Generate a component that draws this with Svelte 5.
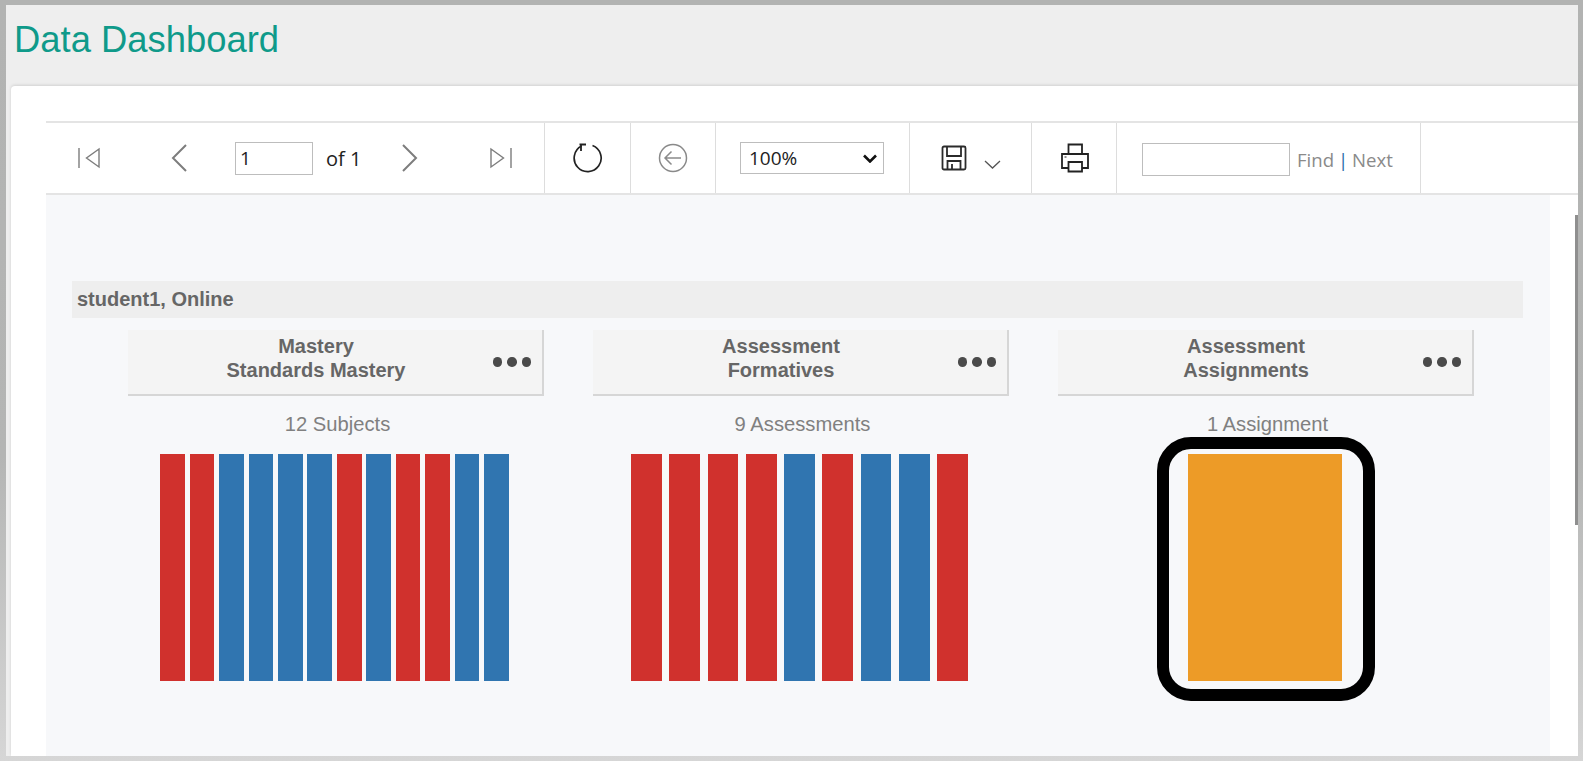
<script>
  const R = 'red', B = 'blue', O = 'orange';
  const panels = [
    { l1: 'Mastery', l2: 'Standards Mastery', sub: '12 Subjects', bars: [R,R,B,B,B,B,R,B,R,R,B,B], cls: 'c12' },
    { l1: 'Assessment', l2: 'Formatives', sub: '9 Assessments', bars: [R,R,R,R,B,R,B,B,R], cls: 'c9' },
    { l1: 'Assessment', l2: 'Assignments', sub: '1 Assignment', bars: [O], cls: 'c1', ring: true }
  ];
</script>

<div class="frame">
  <div class="page">
    <header class="head"><h1>Data Dashboard</h1></header>
    <main class="card">
      <div class="viewer">
        <div class="toolbar">
          <div class="cell nav">
            <svg class="i-first" width="22" height="22" viewBox="0 0 22 22" fill="none" stroke="#7d7d7d" stroke-width="1.4"><path d="M1 1v20M21 2 8.500 11 21 20z"/></svg>
            <svg class="i-prev" width="16" height="28" viewBox="0 0 16 28" fill="none" stroke="#7d7d7d" stroke-width="2"><path d="M15 1 2 14l13 13"/></svg>
            <input class="box pageno" value="1" aria-label="Page" />
            <span class="of">of 1</span>
            <svg class="i-next" width="16" height="28" viewBox="0 0 16 28" fill="none" stroke="#7d7d7d" stroke-width="2"><path d="m1 1 13 13L1 27"/></svg>
            <svg class="i-last" width="22" height="22" viewBox="0 0 22 22" fill="none" stroke="#7d7d7d" stroke-width="1.4"><path d="M21 1v20M1 2l12.500 9L1 20z"/></svg>
          </div>
          <div class="cell w-refresh">
            <svg width="30" height="30" viewBox="0 0 30 30" fill="none" stroke="#222" stroke-width="1.7"><path d="M19.500 2.500a13.500 13.500 0 1 1-11 .6"/><path d="M6.500 1.500h6.500M8 1.500v6.500" stroke-width="1.800"/></svg>
          </div>
          <div class="cell w-back">
            <svg width="30" height="30" viewBox="0 0 30 30" fill="none" stroke="#8a8a8a" stroke-width="1.500"><circle cx="15" cy="15" r="13.500"/><path d="M23 15H7m6.500-6.500L7 15l6.500 6.500"/></svg>
          </div>
          <div class="cell w-zoom">
            <div class="selwrap">
              <select class="box zoomsel" aria-label="Zoom"><option>100%</option></select>
              <svg class="selarrow" width="14" height="9" viewBox="0 0 14 9" fill="none" stroke="#111" stroke-width="2.600"><path d="m1 1.500 6 6 6-6"/></svg>
            </div>
          </div>
          <div class="cell w-save">
            <svg width="26" height="26" viewBox="0 0 26 26" fill="none" stroke="#2b2b2b" stroke-width="1.800"><path d="M3 1.500h20a1.500 1.500 0 0 1 1.500 1.500v20a1.500 1.500 0 0 1-1.500 1.500H3A1.500 1.500 0 0 1 1.500 23V3A1.500 1.500 0 0 1 3 1.500z"/><path d="M6 1.500v9.500h14V1.500M6.500 24.500V16h13v8.500M11 24.500V19"/></svg>
            <svg class="i-chev" width="17" height="9" viewBox="0 0 17 9" fill="none" stroke="#555" stroke-width="1.300"><path d="m1 1 7.500 7L16 1"/></svg>
          </div>
          <div class="cell w-print">
            <svg width="30" height="30" viewBox="0 0 30 30" fill="none" stroke="#222" stroke-width="1.800"><path d="M8.500 11V1.500h13.500V11M8.500 25H2V11h26v14h-6"/><path d="M8.500 19h13.500v9.500H8.500z"/><path d="M4.500 14h2" stroke-width="1"/></svg>
          </div>
          <div class="cell w-find">
            <input class="box findbox" aria-label="Find" />
            <span class="find"><span>Find</span> <b>|</b> <span>Next</span></span>
          </div>
        </div>

        <div class="report">
          <div class="group">student1, Online</div>
          <div class="panels">
            {#each panels as p}
              <section class="panel {p.cls}">
                <div class="tile">
                  <div class="label">{p.l1}<br />{p.l2}</div>
                  <div class="dots"><i></i><i></i><i></i></div>
                </div>
                <div class="sub">{p.sub}</div>
                <div class="chart">
                  {#each p.bars as b}
                    <div class="bar {b}"></div>
                  {/each}
                  {#if p.ring}<div class="ring"></div>{/if}
                </div>
              </section>
            {/each}
          </div>
        </div>
      </div>
    </main>
  </div>
  <div class="thumb"></div>
</div>

<style>
  :global(body) { margin: 0; overflow: hidden; }
  .frame {
    position: relative;
    width: 1583px;
    height: 761px;
    box-sizing: border-box;
    padding: 5px 5px 5px 6px;
    background: linear-gradient(#b2b3b2, #b4b5b4 60%, #d6d6d6);
    overflow: hidden;
    font-family: "Liberation Sans", Arial, sans-serif;
  }
  .page {
    height: 100%;
    background: #eeeeee;
    display: flex;
    flex-direction: column;
    overflow: hidden;
  }
  .head { height: 81px; flex: none; box-sizing: border-box; padding: 14px 0 0 8px; }
  h1 { margin: 0; font-size: 36.4px; line-height: 42px; font-weight: 400; color: #0f9a8a; }
  .card {
    flex: 1;
    margin-left: 5px;
    min-height: 0;
    background: #fff;
    border-radius: 4px 0 0 0;
    box-shadow: 0 -1px 3px rgba(0,0,0,.12);
    padding: 35px 0 0 35px;
  }
  .viewer { height: 100%; display: flex; flex-direction: column; }
  .toolbar {
    flex: none;
    height: 74px;
    box-sizing: border-box;
    display: flex;
    border-top: 2px solid #e4e4e4;
    border-bottom: 2px solid #e4e4e4;
    background: #fff;
    font-family: "Open Sans", "Noto Sans", sans-serif;
  }
  .cell {
    flex: none;
    display: flex;
    align-items: center;
    justify-content: center;
    box-sizing: border-box;
    border-right: 1px solid #dddddd;
  }
  .nav { width: 499px; justify-content: flex-start; padding-left: 32px; }
  .i-prev { margin-left: 71px; }
  .pageno { margin-left: 48px; width: 78px; height: 33px; padding: 0 4px; font-size: 19px; }
  .of { margin-left: 13px; font-size: 20px; color: #222; width: 43px; white-space: nowrap; }
  .i-next { margin-left: 33px; }
  .i-last { margin-left: 72px; }
  .box {
    box-sizing: border-box;
    border: 1px solid #bdbdbd;
    background: #fff;
    color: #222;
    font-family: "Open Sans", "Noto Sans", sans-serif;
    border-radius: 0;
    outline: none;
  }
  .w-refresh { width: 86px; }
  .w-back { width: 85px; }
  .w-zoom { width: 194px; justify-content: flex-start; padding-left: 24px; }
  .selwrap { position: relative; display: flex; }
  .zoomsel { appearance: none; width: 144px; height: 32px; padding: 0 0 0 8px; font-size: 19px; }
  .selarrow { position: absolute; right: 7px; top: 12px; }
  .w-save { width: 122px; justify-content: flex-start; padding-left: 31px; }
  .i-chev { margin-left: 17px; margin-top: 12px; }
  .w-print { width: 85px; padding-left: 2px; }
  .w-find { width: 304px; justify-content: flex-start; padding-left: 25px; }
  .findbox { width: 148px; height: 33px; margin-top: 2px; }
  .find { margin-left: 7px; font-size: 18.6px; color: #8a8a8a; white-space: nowrap; margin-top: 2px; word-spacing: -1px; }
  .find b { font-weight: 400; color: #2a6ca8; }

  .report {
    flex: 1;
    width: 1504px;
    box-sizing: border-box;
    background: #f7f8fa;
    padding: 86px 27px 0 26px;
  }
  .group {
    height: 37px;
    box-sizing: border-box;
    padding-left: 5px;
    background: #eeeeee;
    color: #666;
    font-size: 20px;
    font-weight: 700;
    line-height: 36px;
  }
  .panels {
    display: grid;
    grid-template-columns: repeat(3, 465px);
    margin: 12px 0 0 31px;
  }
  .panel { display: flex; flex-direction: column; }
  .tile {
    width: 416px;
    height: 66px;
    margin-left: 25px;
    box-sizing: border-box;
    display: flex;
    align-items: center;
    background: #f4f4f4;
    border-right: 2px solid #d6d6d6;
    border-bottom: 2px solid #d6d6d6;
    color: #666;
    font-weight: 700;
    font-size: 20px;
    line-height: 24px;
    text-align: center;
  }
  .label { width: 376px; flex: none; align-self: flex-start; margin-top: 4px; }
  .dots { display: flex; gap: 5px; margin-left: -11.500px; }
  .dots i { width: 9.500px; height: 9.500px; border-radius: 50%; background: #4a4a4a; }
  .sub {
    margin-top: 16px;
    height: 24px;
    line-height: 24px;
    font-size: 20.2px;
    color: #808080;
    text-align: center;
    padding-left: 4px;
  }
  .chart {
    position: relative;
    display: flex;
    align-self: center;
    height: 227px;
    margin-top: 18px;
    margin-right: 2px;
  }
  .c12 .chart { gap: 4.800px; }
  .c12 .bar { width: 24.620px; }
  .c9 .chart { gap: 7.700px; }
  .c9 .bar { width: 30.600px; }
  .c1 .bar { width: 154px; }
  .red { background: #d0312d; }
  .blue { background: #3075b0; }
  .orange { background: #ed9b27; }
  .ring {
    position: absolute;
    left: -31px;
    right: -33px;
    top: -17px;
    bottom: -20px;
    border: 12px solid #000;
    border-radius: 34px;
  }
  .thumb {
    position: absolute;
    left: 1575px;
    top: 215px;
    width: 3px;
    height: 310px;
    background: #8f8f8f;
  }
</style>
